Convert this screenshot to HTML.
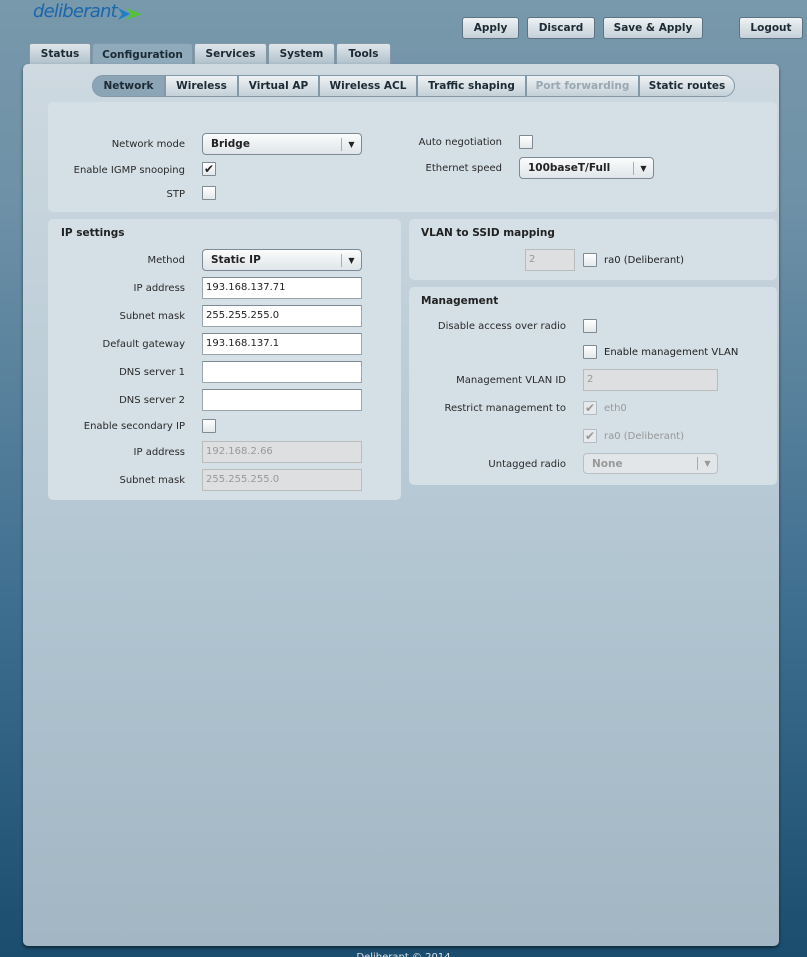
<!DOCTYPE html>
<html><head><meta charset="utf-8"><style>
*{box-sizing:border-box;margin:0;padding:0}
html,body{width:807px;height:957px;overflow:hidden}
body{position:relative;font-family:"DejaVu Sans","Liberation Sans",sans-serif;font-size:10px;color:#222;background:linear-gradient(#7898ab 0px,#6e91a7 200px,#3f6f90 600px,#1a4d6e 957px)}
.a{position:absolute}
.btn{position:absolute;top:17px;height:22px;border:1px solid #5d7383;border-radius:3px;background:linear-gradient(#eef2f4,#c4d0d8);font-weight:bold;font-size:10.5px;text-align:center;line-height:20px;color:#1c2a33}
.tab{position:absolute;top:43px;height:22px;border:1px solid #8399a8;border-bottom:none;border-radius:3px 3px 0 0;background:linear-gradient(#dfe6ea,#aebfca);font-weight:bold;font-size:10.5px;text-align:center;line-height:20px;color:#1c2a33}
.st{position:absolute;top:75px;height:22px;border:1px solid #8399a8;background:linear-gradient(#eef2f4,#c3d0d8);font-weight:bold;font-size:10.5px;text-align:center;line-height:20px;color:#1c2a33}
.box{position:absolute;background:#d4dfe6;border-radius:5px}
.lbl{position:absolute;text-align:right;color:#2a2a2a;line-height:12px;margin-top:2px}
.cb{position:absolute;width:14px;height:14px;border:1px solid #7f8a92;background:linear-gradient(#fff,#e3e8eb);border-radius:1px;font-size:12px;line-height:12px;text-align:center;color:#222}
.cb.d{border-color:#b3bcc2;color:#999;background:#e6eaec}
.inp{position:absolute;width:160px;height:22px;border:1px solid #9aa5ad;border-top-color:#7f8a92;background:#fff;padding-left:3px;line-height:20px;font-size:10px}
.inp.d{background:#dedfe0;color:#999;border-color:#bbb}
.sel{position:absolute;height:22px;border:1px solid #7b8a94;border-radius:4px;background:linear-gradient(#fbfcfc,#dfe5e9);font-weight:bold;line-height:20px;padding-left:8px;font-size:10.5px}
.sel .ar{position:absolute;right:0;top:4px;width:20px;height:13px;border-left:1px solid #aab;font-size:8px;line-height:13px;text-align:center;font-weight:normal}
.sel.d{color:#999;border-color:#b7c0c6;background:#e2e6e8}
.h{position:absolute;font-weight:bold;font-size:10.5px}
.t{position:absolute;line-height:12px;margin-top:2px}
</style></head><body>
<div class="a" style="left:33px;top:1px;font-family:'DejaVu Sans',sans-serif;font-style:italic;font-size:18px;color:#1a66ad;letter-spacing:-0.8px">deliberant</div>
<svg class="a" style="left:118px;top:7px" width="30" height="14"><path d="M0 1 L12 7 L0 13 L4 7Z" fill="#1d7fc6"/><path d="M8 1 L24 7 L8 13 L13 7Z" fill="#52c23a"/></svg>
<div class="btn" style="left:462px;width:57px">Apply</div>
<div class="btn" style="left:527px;width:68px">Discard</div>
<div class="btn" style="left:603px;width:100px">Save &amp; Apply</div>
<div class="btn" style="left:739px;width:64px">Logout</div>
<div class="tab" style="left:29px;width:62px">Status</div>
<div class="tab" style="left:92px;width:101px;background:#8faabb;border-color:#7f98a8;line-height:22px">Configuration</div>
<div class="tab" style="left:194px;width:73px">Services</div>
<div class="tab" style="left:268px;width:67px">System</div>
<div class="tab" style="left:336px;width:55px">Tools</div>
<div class="a" style="left:23px;top:64px;width:756px;height:882px;border-radius:5px;background:linear-gradient(#ced9e0,#b2c6d2 500px,#a2b6c3);box-shadow:0 2px 3px rgba(0,0,0,.5)"></div>
<div class="st" style="left:92px;width:73px;border-radius:11px 0 0 11px;background:#8ba5b7">Network</div>
<div class="st" style="left:165px;width:73px">Wireless</div>
<div class="st" style="left:238px;width:81px">Virtual AP</div>
<div class="st" style="left:319px;width:98px">Wireless ACL</div>
<div class="st" style="left:417px;width:109px">Traffic shaping</div>
<div class="st" style="left:526px;width:113px;color:#9aa8b2">Port forwarding</div>
<div class="st" style="left:639px;width:96px;border-radius:0 11px 11px 0">Static routes</div>

<div class="box" style="left:48px;top:102px;width:729px;height:110px"></div>
<div class="lbl" style="left:40px;width:145px;top:137px">Network mode</div>
<div class="sel" style="left:202px;top:133px;width:160px">Bridge<span class="ar">▼</span></div>
<div class="lbl" style="left:40px;width:145px;top:163px">Enable IGMP snooping</div>
<div class="cb" style="left:202px;top:162px">✔</div>
<div class="lbl" style="left:40px;width:145px;top:187px">STP</div>
<div class="cb" style="left:202px;top:186px"></div>
<div class="lbl" style="left:380px;width:122px;top:135px">Auto negotiation</div>
<div class="cb" style="left:519px;top:135px"></div>
<div class="lbl" style="left:380px;width:122px;top:161px">Ethernet speed</div>
<div class="sel" style="left:519px;top:157px;width:135px">100baseT/Full<span class="ar">▼</span></div>

<div class="box" style="left:48px;top:219px;width:353px;height:281px"></div>
<div class="h" style="left:61px;top:227px">IP settings</div>
<div class="lbl" style="left:40px;width:145px;top:253px">Method</div>
<div class="sel" style="left:202px;top:249px;width:160px">Static IP<span class="ar">▼</span></div>
<div class="lbl" style="left:40px;width:145px;top:281px">IP address</div>
<div class="inp" style="left:202px;top:277px">193.168.137.71</div>
<div class="lbl" style="left:40px;width:145px;top:309px">Subnet mask</div>
<div class="inp" style="left:202px;top:305px">255.255.255.0</div>
<div class="lbl" style="left:40px;width:145px;top:337px">Default gateway</div>
<div class="inp" style="left:202px;top:333px">193.168.137.1</div>
<div class="lbl" style="left:40px;width:145px;top:365px">DNS server 1</div>
<div class="inp" style="left:202px;top:361px"></div>
<div class="lbl" style="left:40px;width:145px;top:393px">DNS server 2</div>
<div class="inp" style="left:202px;top:389px"></div>
<div class="lbl" style="left:40px;width:145px;top:419px">Enable secondary IP</div>
<div class="cb" style="left:202px;top:419px"></div>
<div class="lbl" style="left:40px;width:145px;top:445px">IP address</div>
<div class="inp d" style="left:202px;top:441px">192.168.2.66</div>
<div class="lbl" style="left:40px;width:145px;top:473px">Subnet mask</div>
<div class="inp d" style="left:202px;top:469px">255.255.255.0</div>

<div class="box" style="left:409px;top:219px;width:368px;height:61px"></div>
<div class="h" style="left:421px;top:227px">VLAN to SSID mapping</div>
<div class="inp d" style="left:525px;top:249px;width:50px">2</div>
<div class="cb" style="left:583px;top:253px"></div>
<div class="t" style="left:604px;top:253px">ra0 (Deliberant)</div>

<div class="box" style="left:409px;top:287px;width:368px;height:198px"></div>
<div class="h" style="left:421px;top:295px">Management</div>
<div class="lbl" style="left:400px;width:166px;top:319px">Disable access over radio</div>
<div class="cb" style="left:583px;top:319px"></div>
<div class="cb" style="left:583px;top:345px"></div>
<div class="t" style="left:604px;top:345px">Enable management VLAN</div>
<div class="lbl" style="left:400px;width:166px;top:373px">Management VLAN ID</div>
<div class="inp d" style="left:583px;top:369px;width:135px">2</div>
<div class="lbl" style="left:400px;width:166px;top:401px">Restrict management to</div>
<div class="cb d" style="left:583px;top:401px">✔</div>
<div class="t" style="left:604px;top:401px;color:#999">eth0</div>
<div class="cb d" style="left:583px;top:429px">✔</div>
<div class="t" style="left:604px;top:429px;color:#999">ra0 (Deliberant)</div>
<div class="lbl" style="left:400px;width:166px;top:457px">Untagged radio</div>
<div class="sel d" style="left:583px;top:453px;width:135px;height:21px">None<span class="ar" style="top:3px">▼</span></div>

<div class="a" style="left:0;width:807px;top:952px;text-align:center;color:#d8e2e8;font-size:10px">Deliberant © 2014</div>
</body></html>
